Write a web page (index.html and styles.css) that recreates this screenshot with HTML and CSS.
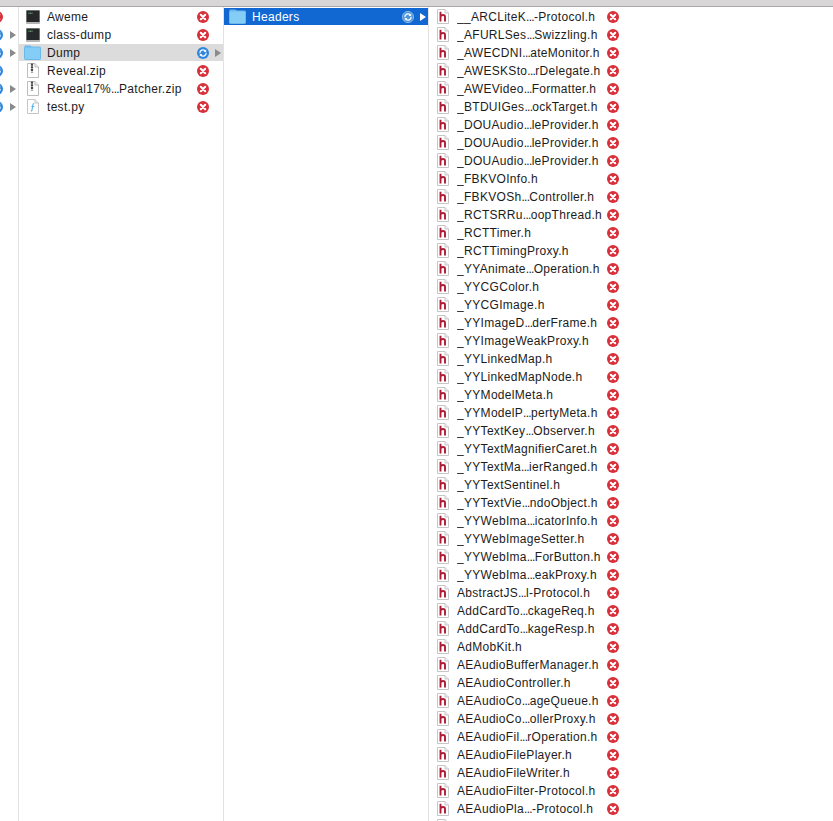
FILE: index.html
```html
<!DOCTYPE html>
<html lang="en">
<head>
<meta charset="utf-8">
<title>Finder columns</title>
<link rel="stylesheet" href="styles.css">
</head>
<body>
<svg class="defs" width="0" height="0" aria-hidden="true">
  <defs>
    <symbol id="x" viewBox="0 0 12 12">
      <circle cx="6" cy="6" r="6" fill="#d8303a"/>
      <path d="M3.8 3.8 8.2 8.2M8.2 3.8 3.8 8.2" stroke="#fff" stroke-width="2.1" stroke-linecap="round"/>
    </symbol>
    <symbol id="sync" viewBox="0 0 12 12">
      <circle cx="6" cy="6" r="6" fill="#2f86dc"/>
      <path d="M2.9 6.3A3.1 3.1 0 0 1 8.2 3.8M9.1 5.7A3.1 3.1 0 0 1 3.8 8.2" fill="none" stroke="#fff" stroke-width="1.2"/>
      <path d="M9.2 2.4V5H6.6ZM2.8 9.6V7H5.4Z" fill="#fff"/>
    </symbol>
    <symbol id="syncsel" viewBox="0 0 12 12">
      <circle cx="6" cy="6" r="5.6" fill="#4f95dd" stroke="#9cc4ec" stroke-width=".8"/>
      <path d="M2.9 6.3A3.1 3.1 0 0 1 8.2 3.8M9.1 5.7A3.1 3.1 0 0 1 3.8 8.2" fill="none" stroke="#fff" stroke-width="1.2"/>
      <path d="M9.2 2.4V5H6.6ZM2.8 9.6V7H5.4Z" fill="#fff"/>
    </symbol>
    <symbol id="folder" viewBox="0 0 17 15">
      <path d="M.5 2V1.2Q.5.5 1.2.5H6Q6.6.5 7 1L8 2Z" fill="#6bb8ea"/>
      <rect x=".5" y="2" width="16" height="12.5" rx=".8" fill="#84cdf7" stroke="#6bb8ea"/>
    </symbol>
    <symbol id="term" viewBox="0 0 14 14">
      <rect x="0" y="0" width="14" height="14" rx="1" fill="#b4b4b4"/>
      <rect x=".5" y=".5" width="13" height="11.5" fill="#26282a"/>
      <path d="M2.5 3.2H6.5" stroke="#7ecb8a" stroke-width="1" stroke-dasharray="1 .5"/>
    </symbol>
    <symbol id="zip" viewBox="0 0 12 15">
      <path d="M.5.5H8L11.5 4V14.5H.5Z" fill="#fff" stroke="#bdbdbd"/>
      <path d="M8 .5V4H11.5" fill="#eee" stroke="#bdbdbd"/>
      <path d="M5 .5V9.5" stroke="#4a4a4a" stroke-width="2.2" stroke-dasharray="2.2 .6"/>
    </symbol>
    <symbol id="py" viewBox="0 0 12 15">
      <path d="M.5.5H8L11.5 4V14.5H.5Z" fill="#fff" stroke="#c6c6c6"/>
      <path d="M8 .5V4H11.5" fill="#eee" stroke="#c6c6c6"/>
      <path d="M7.2 4.5Q6 4.5 5.8 6L5 11Q4.8 12.3 3.8 12M4.4 7.5H7.2" fill="none" stroke="#4fb2ea" stroke-width="1.1"/>
    </symbol>
    <symbol id="h" viewBox="0 0 12 15">
      <path d="M.5.5H8L11.5 4V14.5H.5Z" fill="#fff" stroke="#c6c6c6"/>
      <path d="M8 .5V4H11.5" fill="#f0f0f0" stroke="#c6c6c6"/>
      <path d="M3.5 2.8V12.5M3.5 7.6Q4.2 6 6 6 8 6 8 7.8V12.5" fill="none" stroke="#ae1c36" stroke-width="1.9"/>
    </symbol>
  </defs>
</svg>

<div class="topbar"></div>
<main class="browser">
  <section class="col col-rail">
    <div class="row"><svg class="st"><use href="#x"/></svg><span class="arrow-slot"></span></div>
    <div class="row"><svg class="st"><use href="#sync"/></svg><span class="arrow-slot"><i class="arrow"></i></span></div>
    <div class="row"><svg class="st"><use href="#sync"/></svg><span class="arrow-slot"><i class="arrow"></i></span></div>
    <div class="row"><svg class="st"><use href="#sync"/></svg><span class="arrow-slot"></span></div>
    <div class="row"><svg class="st"><use href="#sync"/></svg><span class="arrow-slot"><i class="arrow"></i></span></div>
    <div class="row"><svg class="st"><use href="#sync"/></svg><span class="arrow-slot"><i class="arrow"></i></span></div>
  </section>

  <section class="col col-a">
    <div class="row"><svg class="ic-term"><use href="#term"/></svg><span class="name">Aweme</span><svg class="st"><use href="#x"/></svg><span class="arrow-slot"></span></div>
    <div class="row"><svg class="ic-term"><use href="#term"/></svg><span class="name">class-dump</span><svg class="st"><use href="#x"/></svg><span class="arrow-slot"></span></div>
    <div class="row is-parent"><svg class="ic-folder"><use href="#folder"/></svg><span class="name">Dump</span><svg class="st"><use href="#sync"/></svg><span class="arrow-slot"><i class="arrow"></i></span></div>
    <div class="row"><svg class="ic-doc"><use href="#zip"/></svg><span class="name">Reveal.zip</span><svg class="st"><use href="#x"/></svg><span class="arrow-slot"></span></div>
    <div class="row"><svg class="ic-doc"><use href="#zip"/></svg><span class="name">Reveal17%<span class="dots">...</span>Patcher.zip</span><svg class="st"><use href="#x"/></svg><span class="arrow-slot"></span></div>
    <div class="row"><svg class="ic-doc"><use href="#py"/></svg><span class="name">test.py</span><svg class="st"><use href="#x"/></svg><span class="arrow-slot"></span></div>
  </section>

  <section class="col col-b">
    <div class="row is-selected"><svg class="ic-folder"><use href="#folder"/></svg><span class="name">Headers</span><svg class="st"><use href="#syncsel"/></svg><span class="arrow-slot"><i class="arrow"></i></span></div>
  </section>

  <section class="col col-c">
    <div class="row"><svg class="ic-doc"><use href="#h"/></svg><span class="name">__ARCLiteK<span class="dots">...</span>-Protocol.h</span><svg class="st"><use href="#x"/></svg></div>
    <div class="row"><svg class="ic-doc"><use href="#h"/></svg><span class="name">_AFURLSes<span class="dots">...</span>Swizzling.h</span><svg class="st"><use href="#x"/></svg></div>
    <div class="row"><svg class="ic-doc"><use href="#h"/></svg><span class="name">_AWECDNI<span class="dots">...</span>ateMonitor.h</span><svg class="st"><use href="#x"/></svg></div>
    <div class="row"><svg class="ic-doc"><use href="#h"/></svg><span class="name">_AWESKSto<span class="dots">...</span>rDelegate.h</span><svg class="st"><use href="#x"/></svg></div>
    <div class="row"><svg class="ic-doc"><use href="#h"/></svg><span class="name">_AWEVideo<span class="dots">...</span>Formatter.h</span><svg class="st"><use href="#x"/></svg></div>
    <div class="row"><svg class="ic-doc"><use href="#h"/></svg><span class="name">_BTDUIGes<span class="dots">...</span>ockTarget.h</span><svg class="st"><use href="#x"/></svg></div>
    <div class="row"><svg class="ic-doc"><use href="#h"/></svg><span class="name">_DOUAudio<span class="dots">...</span>leProvider.h</span><svg class="st"><use href="#x"/></svg></div>
    <div class="row"><svg class="ic-doc"><use href="#h"/></svg><span class="name">_DOUAudio<span class="dots">...</span>leProvider.h</span><svg class="st"><use href="#x"/></svg></div>
    <div class="row"><svg class="ic-doc"><use href="#h"/></svg><span class="name">_DOUAudio<span class="dots">...</span>leProvider.h</span><svg class="st"><use href="#x"/></svg></div>
    <div class="row"><svg class="ic-doc"><use href="#h"/></svg><span class="name">_FBKVOInfo.h</span><svg class="st"><use href="#x"/></svg></div>
    <div class="row"><svg class="ic-doc"><use href="#h"/></svg><span class="name">_FBKVOSh<span class="dots">...</span>Controller.h</span><svg class="st"><use href="#x"/></svg></div>
    <div class="row"><svg class="ic-doc"><use href="#h"/></svg><span class="name">_RCTSRRu<span class="dots">...</span>oopThread.h</span><svg class="st"><use href="#x"/></svg></div>
    <div class="row"><svg class="ic-doc"><use href="#h"/></svg><span class="name">_RCTTimer.h</span><svg class="st"><use href="#x"/></svg></div>
    <div class="row"><svg class="ic-doc"><use href="#h"/></svg><span class="name">_RCTTimingProxy.h</span><svg class="st"><use href="#x"/></svg></div>
    <div class="row"><svg class="ic-doc"><use href="#h"/></svg><span class="name">_YYAnimate<span class="dots">...</span>Operation.h</span><svg class="st"><use href="#x"/></svg></div>
    <div class="row"><svg class="ic-doc"><use href="#h"/></svg><span class="name">_YYCGColor.h</span><svg class="st"><use href="#x"/></svg></div>
    <div class="row"><svg class="ic-doc"><use href="#h"/></svg><span class="name">_YYCGImage.h</span><svg class="st"><use href="#x"/></svg></div>
    <div class="row"><svg class="ic-doc"><use href="#h"/></svg><span class="name">_YYImageD<span class="dots">...</span>derFrame.h</span><svg class="st"><use href="#x"/></svg></div>
    <div class="row"><svg class="ic-doc"><use href="#h"/></svg><span class="name">_YYImageWeakProxy.h</span><svg class="st"><use href="#x"/></svg></div>
    <div class="row"><svg class="ic-doc"><use href="#h"/></svg><span class="name">_YYLinkedMap.h</span><svg class="st"><use href="#x"/></svg></div>
    <div class="row"><svg class="ic-doc"><use href="#h"/></svg><span class="name">_YYLinkedMapNode.h</span><svg class="st"><use href="#x"/></svg></div>
    <div class="row"><svg class="ic-doc"><use href="#h"/></svg><span class="name">_YYModelMeta.h</span><svg class="st"><use href="#x"/></svg></div>
    <div class="row"><svg class="ic-doc"><use href="#h"/></svg><span class="name">_YYModelP<span class="dots">...</span>pertyMeta.h</span><svg class="st"><use href="#x"/></svg></div>
    <div class="row"><svg class="ic-doc"><use href="#h"/></svg><span class="name">_YYTextKey<span class="dots">...</span>Observer.h</span><svg class="st"><use href="#x"/></svg></div>
    <div class="row"><svg class="ic-doc"><use href="#h"/></svg><span class="name">_YYTextMagnifierCaret.h</span><svg class="st"><use href="#x"/></svg></div>
    <div class="row"><svg class="ic-doc"><use href="#h"/></svg><span class="name">_YYTextMa<span class="dots">...</span>ierRanged.h</span><svg class="st"><use href="#x"/></svg></div>
    <div class="row"><svg class="ic-doc"><use href="#h"/></svg><span class="name">_YYTextSentinel.h</span><svg class="st"><use href="#x"/></svg></div>
    <div class="row"><svg class="ic-doc"><use href="#h"/></svg><span class="name">_YYTextVie<span class="dots">...</span>ndoObject.h</span><svg class="st"><use href="#x"/></svg></div>
    <div class="row"><svg class="ic-doc"><use href="#h"/></svg><span class="name">_YYWebIma<span class="dots">...</span>icatorInfo.h</span><svg class="st"><use href="#x"/></svg></div>
    <div class="row"><svg class="ic-doc"><use href="#h"/></svg><span class="name">_YYWebImageSetter.h</span><svg class="st"><use href="#x"/></svg></div>
    <div class="row"><svg class="ic-doc"><use href="#h"/></svg><span class="name">_YYWebIma<span class="dots">...</span>ForButton.h</span><svg class="st"><use href="#x"/></svg></div>
    <div class="row"><svg class="ic-doc"><use href="#h"/></svg><span class="name">_YYWebIma<span class="dots">...</span>eakProxy.h</span><svg class="st"><use href="#x"/></svg></div>
    <div class="row"><svg class="ic-doc"><use href="#h"/></svg><span class="name">AbstractJS<span class="dots">...</span>l-Protocol.h</span><svg class="st"><use href="#x"/></svg></div>
    <div class="row"><svg class="ic-doc"><use href="#h"/></svg><span class="name">AddCardTo<span class="dots">...</span>ckageReq.h</span><svg class="st"><use href="#x"/></svg></div>
    <div class="row"><svg class="ic-doc"><use href="#h"/></svg><span class="name">AddCardTo<span class="dots">...</span>kageResp.h</span><svg class="st"><use href="#x"/></svg></div>
    <div class="row"><svg class="ic-doc"><use href="#h"/></svg><span class="name">AdMobKit.h</span><svg class="st"><use href="#x"/></svg></div>
    <div class="row"><svg class="ic-doc"><use href="#h"/></svg><span class="name">AEAudioBufferManager.h</span><svg class="st"><use href="#x"/></svg></div>
    <div class="row"><svg class="ic-doc"><use href="#h"/></svg><span class="name">AEAudioController.h</span><svg class="st"><use href="#x"/></svg></div>
    <div class="row"><svg class="ic-doc"><use href="#h"/></svg><span class="name">AEAudioCo<span class="dots">...</span>ageQueue.h</span><svg class="st"><use href="#x"/></svg></div>
    <div class="row"><svg class="ic-doc"><use href="#h"/></svg><span class="name">AEAudioCo<span class="dots">...</span>ollerProxy.h</span><svg class="st"><use href="#x"/></svg></div>
    <div class="row"><svg class="ic-doc"><use href="#h"/></svg><span class="name">AEAudioFil<span class="dots">...</span>rOperation.h</span><svg class="st"><use href="#x"/></svg></div>
    <div class="row"><svg class="ic-doc"><use href="#h"/></svg><span class="name">AEAudioFilePlayer.h</span><svg class="st"><use href="#x"/></svg></div>
    <div class="row"><svg class="ic-doc"><use href="#h"/></svg><span class="name">AEAudioFileWriter.h</span><svg class="st"><use href="#x"/></svg></div>
    <div class="row"><svg class="ic-doc"><use href="#h"/></svg><span class="name">AEAudioFilter-Protocol.h</span><svg class="st"><use href="#x"/></svg></div>
    <div class="row"><svg class="ic-doc"><use href="#h"/></svg><span class="name">AEAudioPla<span class="dots">...</span>-Protocol.h</span><svg class="st"><use href="#x"/></svg></div>
    <div class="row"><svg class="ic-doc"><use href="#h"/></svg><span class="name"></span><svg class="st"><use href="#x"/></svg></div>
  </section>
</main>
</body>
</html>
```

FILE: styles.css
```css
* { box-sizing: border-box; }
html, body { margin: 0; height: 100%; overflow: hidden; background: #fff; }
body {
  display: flex;
  flex-direction: column;
  font-family: "Liberation Sans", Arial, sans-serif;
  font-size: 12px;
  letter-spacing: .3px;
  color: #1c1c1c;
}
.defs { display: block; height: 0; }
.topbar {
  flex: 0 0 7px;
  background: #d8d6d6;
  border-bottom: 1px solid #aaa8a8;
}
.browser { flex: 1; display: flex; min-height: 0; overflow: hidden; }
.col {
  display: flex;
  flex-direction: column;
  gap: 1px;
  padding-top: 1px;
  overflow: hidden;
  border-right: 1px solid #e2e2e2;
}
.col-rail { flex: 0 0 19px; }
.col-a, .col-b { flex: 0 0 205px; }
.col-c { flex: 0 0 auto; width: 190px; border-right: 0; }
.row {
  flex: 0 0 17px;
  display: flex;
  align-items: center;
  min-width: 0;
}
.name {
  flex: 1;
  min-width: 0;
  height: 17px;
  white-space: nowrap;
  overflow: hidden;
  line-height: 19px;
}
.dots { letter-spacing: -.7px; }
.st { flex: 0 0 12px; width: 12px; height: 12px; }
.arrow-slot { flex: 0 0 14px; display: flex; align-items: center; padding-left: 6px; }
.arrow {
  display: block;
  width: 0;
  height: 0;
  border-left: 6px solid #8a8a8a;
  border-top: 4px solid transparent;
  border-bottom: 4px solid transparent;
}
.col-rail .row { justify-content: flex-end; }
.col-rail .arrow-slot { flex-basis: 15px; padding-left: 7px; }
.ic-term { width: 14px; height: 14px; margin: 0 7px; flex: none; }
.ic-folder { width: 17px; height: 15px; margin: 0 6px 0 5px; flex: none; }
.ic-doc { width: 12px; height: 15px; margin: 0 8px; flex: none; }
.col-c .name { flex: 0 0 150px; }
.is-parent { background: #dcdcdc; }
.is-selected { background: #1268d3; color: #fff; }
.is-selected .arrow { border-left-color: #fff; }
```
